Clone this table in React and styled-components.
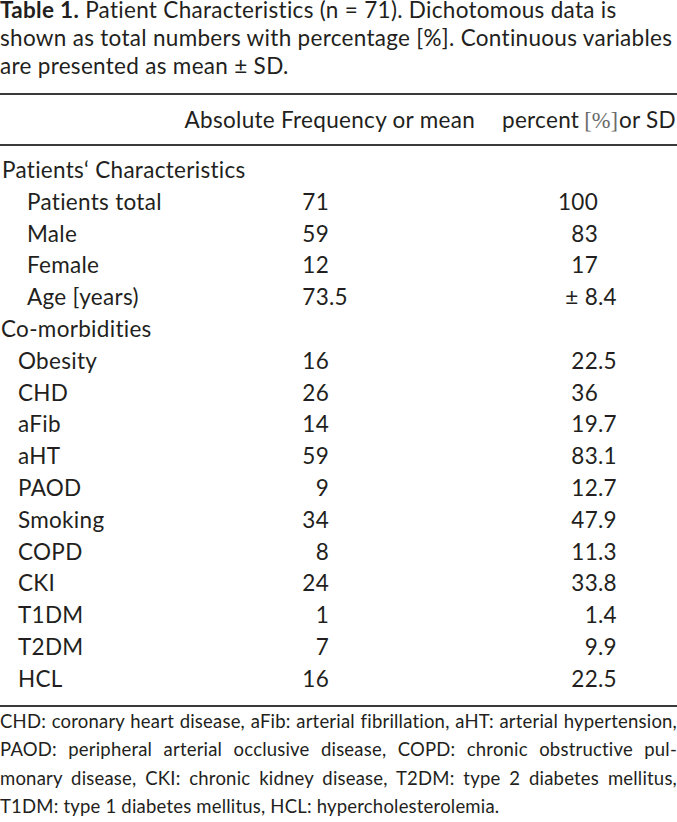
import React from 'react'
import styled, { createGlobalStyle } from 'styled-components'

const INK = '#231f20'

const GlobalStyle = createGlobalStyle`
  html, body {
    margin: 0;
    padding: 0;
    background: #ffffff;
  }
  body {
    font-family: Lato, "Open Sans", sans-serif;
    color: ${INK};
  }
`

const Page = styled.div`
  width: 677px;
  display: flex;
  flex-direction: column;
`

const Caption = styled.div`
  font-size: 22.5px;
  letter-spacing: 0.3px;
  line-height: 28px;
  margin-top: -4px;
`

const CaptionLine = styled.div`
  white-space: nowrap;
`

const Strong = styled.span`
  font-weight: 700;
`

const Rule = styled.div`
  border-top: 2px solid #3a3a3a;
  margin-top: ${p => p.$top || 0}px;
`

const HeaderRow = styled.div`
  display: grid;
  grid-template-columns: 475px 1fr;
  column-gap: 27px;
  height: 49px;
  font-size: 22.5px;
  letter-spacing: 0.3px;
  line-height: 49px;
  white-space: nowrap;
`

const HeadCell = styled.div`
  text-align: ${p => p.$align || 'left'};
`

const MathPct = styled.span`
  font-family: "Liberation Serif", serif;
  font-weight: 400;
  color: #6a6a6a;
  letter-spacing: 0;
  margin: 0 1px 0 5px;
`

const Body = styled.div`
  padding: 8px 0 10px;
`

const Row = styled.div`
  display: grid;
  grid-template-columns: 280px 200px 1fr;
  height: 31.8px;
  font-size: 22.5px;
  letter-spacing: 0.3px;
  line-height: 31.8px;
  white-space: nowrap;
`

const Label = styled.div`
  padding-left: ${p => p.$indent || 0}px;
`

const NumCell = styled.div`
  display: flex;
`

const IntPart = styled.span`
  width: ${p => p.$w}px;
  text-align: right;
  flex: none;
`

const FracPart = styled.span`
  text-align: left;
`

const Footnote = styled.div`
  font-size: 18.5px;
  letter-spacing: 0.2px;
  line-height: 28.5px;
`

const FootLine = styled.div`
  text-align: justify;
  text-align-last: ${p => (p.$last ? 'left' : 'justify')};
  white-space: nowrap;
`

const rows = [
  { label: 'Patients‘ Characteristics', indent: 2 },
  { label: 'Patients total', indent: 27, a: '71', b: '100' },
  { label: 'Male', indent: 27, a: '59', b: '83' },
  { label: 'Female', indent: 27, a: '12', b: '17' },
  { label: 'Age [years)', indent: 27, a: '73.5', b: '± 8.4' },
  { label: 'Co-morbidities', indent: 1 },
  { label: 'Obesity', indent: 18, a: '16', b: '22.5' },
  { label: 'CHD', indent: 18, a: '26', b: '36' },
  { label: 'aFib', indent: 18, a: '14', b: '19.7' },
  { label: 'aHT', indent: 18, a: '59', b: '83.1' },
  { label: 'PAOD', indent: 18, a: '9', b: '12.7' },
  { label: 'Smoking', indent: 18, a: '34', b: '47.9' },
  { label: 'COPD', indent: 18, a: '8', b: '11.3' },
  { label: 'CKI', indent: 18, a: '24', b: '33.8' },
  { label: 'T1DM', indent: 18, a: '1', b: '1.4' },
  { label: 'T2DM', indent: 18, a: '7', b: '9.9' },
  { label: 'HCL', indent: 18, a: '16', b: '22.5' },
]

const footLines = [
  'CHD: coronary heart disease, aFib: arterial fibrillation, aHT: arterial hypertension,',
  'PAOD: peripheral arterial occlusive disease, COPD: chronic obstructive pul-',
  'monary disease, CKI: chronic kidney disease, T2DM: type 2 diabetes mellitus,',
  'T1DM: type 1 diabetes mellitus, HCL: hypercholesterolemia.',
]

// split a value at its decimal point so the column lines up on it
function Num ({ value, w }) {
  if (value === undefined) return <NumCell />
  const dot = value.indexOf('.')
  const int = dot === -1 ? value : value.slice(0, dot)
  const frac = dot === -1 ? '' : value.slice(dot)
  return (
    <NumCell>
      <IntPart $w={w}>{int}</IntPart>
      <FracPart>{frac}</FracPart>
    </NumCell>
  )
}

export default function App () {
  return (
    <Page>
      <GlobalStyle />
      <Caption>
        <CaptionLine>
          <Strong>Table 1.</Strong> Patient Characteristics (n = 71). Dichotomous data is
        </CaptionLine>
        <CaptionLine>shown as total numbers with percentage [%]. Continuous variables</CaptionLine>
        <CaptionLine>are presented as mean ± SD.</CaptionLine>
      </Caption>

      <Rule $top={13} />
      <HeaderRow>
        <HeadCell $align='right'>Absolute Frequency or mean</HeadCell>
        <HeadCell>
          percent<MathPct>[%]</MathPct>or SD
        </HeadCell>
      </HeaderRow>
      <Rule />

      <Body>
        {rows.map(r => (
          <Row key={r.label}>
            <Label $indent={r.indent}>{r.label}</Label>
            <Num value={r.a} w={49} />
            <Num value={r.b} w={118} />
          </Row>
        ))}
      </Body>
      <Rule />

      <Footnote>
        {footLines.map((line, i) => (
          <FootLine key={i} $last={i === footLines.length - 1}>{line}</FootLine>
        ))}
      </Footnote>
    </Page>
  )
}
